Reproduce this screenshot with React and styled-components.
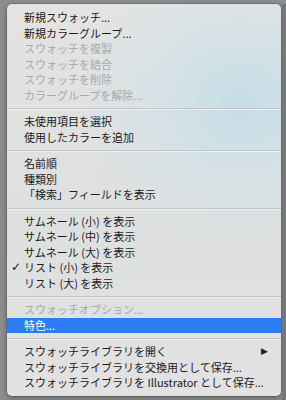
import React from "react";
import styled, { createGlobalStyle } from "styled-components";

const GlobalStyle = createGlobalStyle`
  html, body {
    margin: 0;
    padding: 0;
    width: 286px;
    height: 400px;
    overflow: hidden;
    background: #8d8d8d;
  }
`;

const menuGroups = [
  [
    { label: "新規スウォッチ..." },
    { label: "新規カラーグループ..." },
    { label: "スウォッチを複製", disabled: true },
    { label: "スウォッチを結合", disabled: true },
    { label: "スウォッチを削除", disabled: true },
    { label: "カラーグループを解除...", disabled: true },
  ],
  [{ label: "未使用項目を選択" }, { label: "使用したカラーを追加" }],
  [
    { label: "名前順" },
    { label: "種類別" },
    { label: "「検索」フィールドを表示" },
  ],
  [
    { label: "サムネール (小) を表示" },
    { label: "サムネール (中) を表示" },
    { label: "サムネール (大) を表示" },
    { label: "リスト (小) を表示", checked: true },
    { label: "リスト (大) を表示" },
  ],
  [
    { label: "スウォッチオプション...", disabled: true },
    { label: "特色...", active: true },
  ],
  [
    { label: "スウォッチライブラリを開く", submenu: true },
    { label: "スウォッチライブラリを交換用として保存..." },
    { label: "スウォッチライブラリを Illustrator として保存..." },
  ],
];

function App() {
  return (
    <>
      <GlobalStyle />
      <Desktop>
        <Menu>
          {menuGroups.map((group, gi) => (
            <React.Fragment key={gi}>
              {gi > 0 && <Separator />}
              {group.map((item) => (
                <Item
                  key={item.label}
                  $disabled={item.disabled}
                  $active={item.active}
                >
                  <Check>{item.checked ? "✓" : ""}</Check>
                  <Label>{item.label}</Label>
                  {item.submenu && <Arrow>▶</Arrow>}
                </Item>
              ))}
            </React.Fragment>
          ))}
        </Menu>
        <Scrollbar />
      </Desktop>
    </>
  );
}

const Desktop = styled.div`
  display: flex;
  align-items: flex-start;
  height: 400px;
  padding: 4px 0 0 7px;
  box-sizing: border-box;
`;

const Scrollbar = styled.div`
  flex: 1;
  align-self: stretch;
  margin-left: 1px;
  background: #777777;
`;

const Menu = styled.div`
  width: 274px;
  height: 392px;
  box-sizing: border-box;
  padding: 6px 0 0;
  border-radius: 5px;
  background:
    radial-gradient(
      ellipse 170px 150px at 235px 100px,
      rgba(196, 222, 232, 0.95),
      rgba(210, 226, 232, 0.5) 60%,
      rgba(224, 224, 224, 0) 100%
    ),
    linear-gradient(180deg, #e3e3e3 0%, #dedfdf 60%, #e2e2e2 100%);
  box-shadow: 0 0 0 0.5px rgba(0, 0, 0, 0.25), 0 2px 6px rgba(0, 0, 0, 0.3);
  font-family: "Noto Sans CJK JP", "Noto Sans", sans-serif;
  font-size: 11px;
`;

const Item = styled.div`
  display: flex;
  align-items: center;
  height: 15.5px;
  line-height: 15.5px;
  padding: 0 13px 0 4px;
  color: ${(p) => (p.$active ? "#ffffff" : p.$disabled ? "#a9a9a9" : "#1b1b1b")};
  background: ${(p) => (p.$active ? "#2c7df5" : "transparent")};
`;

const Check = styled.span`
  width: 13px;
  font-family: "DejaVu Sans", sans-serif;
  font-size: 12px;
  font-weight: bold;
  color: #111;
`;

const Label = styled.span`
  flex: 1;
  white-space: nowrap;
`;

const Arrow = styled.span`
  font-family: "DejaVu Sans", sans-serif;
  font-size: 9px;
  color: #222;
`;

const Separator = styled.div`
  height: 1px;
  margin: 5px 0 4px;
  background: #c3c6c7;
  border-bottom: 1px solid #ededed;
`;

export default App;
